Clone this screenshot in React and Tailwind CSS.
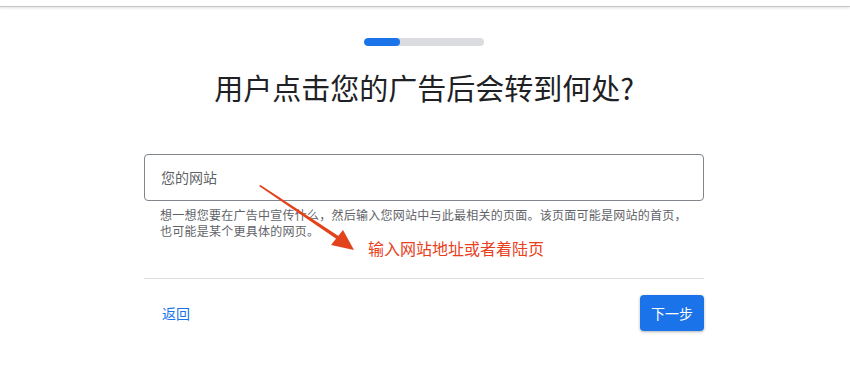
import React from "react";

export default function App() {
  const font = { fontFamily: '"Noto Sans CJK SC", "Noto Sans", sans-serif' };
  return (
    <div className="relative w-[850px] h-[373px] bg-white overflow-hidden" style={font}>
      <div className="h-[7px] border-b border-[#c6c6c6] shadow-[0_1px_3px_rgba(0,0,0,0.12)]" />
      <div className="ml-[144px] w-[560px] flex flex-col">
        <div className="mt-[31px] mx-auto w-[120px] h-[8px] rounded-full bg-[#dadce0] overflow-hidden">
          <div className="w-[36px] h-full rounded-full bg-[#1a73e8]" />
        </div>
        <h1 className="mt-[22px] text-center text-[29px] leading-[38px] text-[#202124] font-normal">
          用户点击您的广告后会转到何处?
        </h1>
        <div className="mt-[48px] h-[47px] border border-[#80868b] rounded-[4px] flex items-center px-[16px]">
          <span className="text-[14px] text-[#5f6368]">您的网站</span>
        </div>
        <div className="mt-[6px] pl-[16px] flex flex-col text-[12px] leading-[16px] tracking-[0.25px] text-[#5f6368] whitespace-nowrap">
          <span>想一想您要在广告中宣传什么，然后输入您网站中与此最相关的页面。该页面可能是网站的首页，</span>
          <span>也可能是某个更具体的网页。</span>
        </div>
        <div className="mt-[39px] border-t border-[#dadce0]" />
        <div className="mt-[16px] flex items-center justify-between">
          <button className="ml-[8px] px-[10px] h-[36px] text-[14px] text-[#1a73e8]">返回</button>
          <button className="w-[64px] h-[36px] rounded-[4px] bg-[#1a73e8] text-white text-[14px] shadow-[0_1px_3px_rgba(0,0,0,0.3)]">
            下一步
          </button>
        </div>
      </div>
      <svg className="absolute left-0 top-0 pointer-events-none" width="850" height="373">
        <polygon points="259,186 260.5,185 340,237 338,240" fill="#e2421c" />
        <polygon points="354,250 331,245 343,230" fill="#e2421c" />
      </svg>
      <div className="absolute left-[368px] top-[240px] text-[16px] leading-[16px] text-[#e8401c]">
        输入网站地址或者着陆页
      </div>
    </div>
  );
}
